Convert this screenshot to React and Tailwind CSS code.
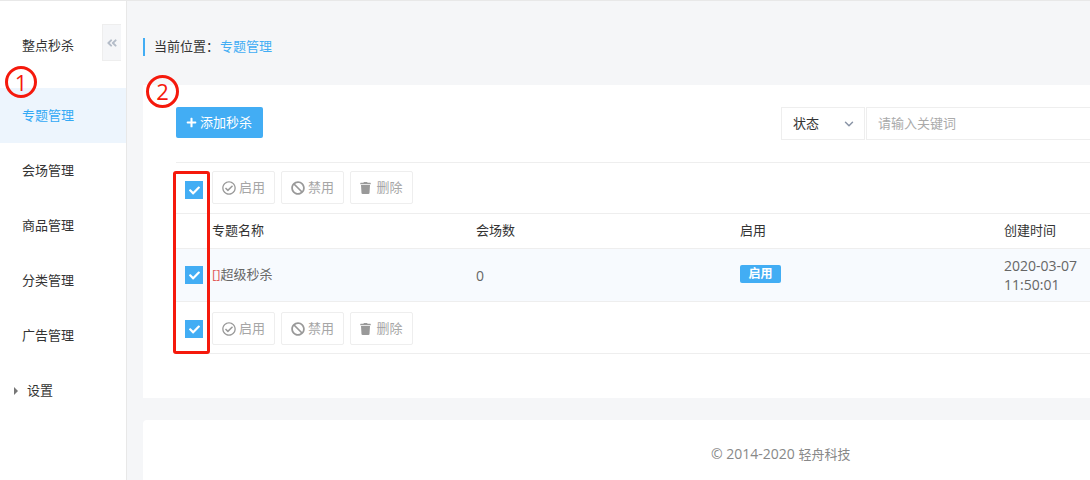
import { ChevronDown } from 'lucide-react'
import { FaPlus, FaCheck, FaRegCheckCircle, FaBan, FaTrash, FaAngleDoubleLeft } from 'react-icons/fa'

const font = { fontFamily: '"Open Sans", "Noto Sans CJK SC", sans-serif' }

const menuItems = ['专题管理', '会场管理', '商品管理', '分类管理', '广告管理']

const CheckBox = ({ className = '' }) => (
  <div className={`w-[18px] h-[18px] bg-[#42adf4] flex items-center justify-center shrink-0 ${className}`}>
    <FaCheck className="w-[11px] h-[11px] text-white" />
  </div>
)

const ActionBar = ({ className, boxClass }) => (
  <div className={`flex items-start pl-[9px] ${className}`}>
    <CheckBox className={boxClass} />
    <div className="flex gap-[6px] ml-[9px]">
      <button className="flex items-center justify-center gap-[3px] w-[63px] h-[33px] border border-[#eeeeee] rounded-[2px] text-[13px] text-[#a6a6a6]">
        <FaRegCheckCircle className="w-[14px] h-[14px] text-[#999999]" />
        启用
      </button>
      <button className="flex items-center justify-center gap-[3px] w-[63px] h-[33px] border border-[#eeeeee] rounded-[2px] text-[13px] text-[#a6a6a6]">
        <FaBan className="w-[14px] h-[14px] text-[#999999]" />
        禁用
      </button>
      <button className="flex items-center justify-center gap-[5px] w-[63px] h-[33px] border border-[#eeeeee] rounded-[2px] text-[13px] text-[#a6a6a6]">
        <FaTrash className="w-[11px] h-[12px] text-[#999999]" />
        删除
      </button>
    </div>
  </div>
)

const Sidebar = () => (
  <aside className="w-[127px] shrink-0 bg-white border-r border-[#e8e8e8] flex flex-col pt-[17px] text-[13px] text-[#333333]">
    <div className="h-[55px] flex items-center pl-[22px] mb-[15px]">整点秒杀</div>
    {menuItems.map((item, i) => (
      <div
        key={item}
        className={`h-[55px] flex items-center pl-[22px] pt-[1px] ${i === 0 ? 'bg-[#edf5fd] text-[#33a9f5]' : ''}`}
      >
        {item}
      </div>
    ))}
    <div className="h-[55px] flex items-center pl-[14px] pt-[1px] gap-[9px]">
      <span className="w-0 h-0 border-y-[4px] border-y-transparent border-l-[4px] border-l-[#777777]" />
      设置
    </div>
  </aside>
)

export default function App() {
  return (
    <div className="relative w-[1090px] h-[480px] overflow-hidden flex flex-col bg-[#f5f6f8]" style={font}>
      <div className="h-[1px] shrink-0 bg-[#e8e8e8]" />
      <div className="flex flex-1 min-h-0">
        <Sidebar />
        <main className="flex-1 min-w-0 pl-[16px] flex flex-col">
          <div className="h-[84px] shrink-0 pt-[37px]">
            <div className="h-[18px] border-l-2 border-[#42adf4] pl-[9px] flex items-center text-[13px] text-[#333333]">
              当前位置：<span className="text-[#42adf4] ml-[1px]">专题管理</span>
            </div>
          </div>
          <section className="h-[313px] shrink-0 bg-white pl-[33px] pt-[22px]">
            <div className="flex items-start justify-between">
              <button className="flex items-center gap-[3px] w-[87px] h-[31px] pl-[10px] bg-[#42adf4] rounded-[2px] text-white text-[13px]">
                <FaPlus className="w-[11px] h-[11px]" />
                添加秒杀
              </button>
              <div className="flex gap-[1px]">
                <div className="w-[84px] h-[33px] border border-[#eeeeee] flex items-center justify-between pl-[11px] pr-[8px] text-[13px] text-[#333333]">
                  状态
                  <ChevronDown className="w-[14px] h-[14px] text-[#8a94a6]" strokeWidth={2.5} />
                </div>
                <div className="w-[224px] h-[33px] border border-[#eeeeee] border-r-0 flex items-center pl-[11px] text-[13px] text-[#aaaaaa]">
                  请输入关键词
                </div>
              </div>
            </div>

            <div className="mt-[22px] border-t border-[#eeeeee]">
              <ActionBar className="h-[50px] pt-[8px]" boxClass="mt-[10px]" />
              <div className="border-t border-[#eeeeee] h-[35px] grid grid-cols-[36px_264px_264px_264px_1fr] items-center text-[13px] text-[#333333]">
                <span />
                <span>专题名称</span>
                <span>会场数</span>
                <span>启用</span>
                <span>创建时间</span>
              </div>
              <div className="border-t border-[#eeeeee] h-[53px] bg-[#f7fafe] grid grid-cols-[36px_264px_264px_264px_1fr] items-center text-[13px] text-[#666666]">
                <div className="pl-[9px]">
                  <CheckBox />
                </div>
                <span>
                  <span className="text-[#e25c5c]">[]</span>超级秒杀
                </span>
                <span className="text-[14px]">0</span>
                <span>
                  <span className="inline-flex items-center justify-center w-[41px] h-[18px] bg-[#42adf4] rounded-[2px] text-white text-[12px] font-bold -translate-y-[1px]">
                    启用
                  </span>
                </span>
                <span className="text-[14px] leading-[19px]">
                  2020-03-07
                  <br />
                  11:50:01
                </span>
              </div>
              <ActionBar className="h-[53px] pt-[10px] border-t border-b border-[#eeeeee]" boxClass="mt-[8px]" />
            </div>
          </section>
          <footer className="mt-[22px] flex-1 bg-white rounded-tl-[4px] pt-[23px] pl-[568px] text-[13px] text-[#888888]">
            <span className="text-[14px]">© 2014-2020 </span>轻舟科技
          </footer>
        </main>
      </div>

      {/* 收起侧栏 */}
      <div className="absolute left-[102px] top-[24px] w-[19px] h-[37px] bg-[#f5f6f8] border border-[#eeeeee] border-r-0 flex items-center justify-center">
        <FaAngleDoubleLeft className="w-[12px] h-[12px] text-[#b4bcc8]" />
      </div>

      {/* 标注 */}
      <div className="absolute left-[5px] top-[66px] w-[32px] h-[32px] rounded-full border-[3px] border-[#f5190c] flex items-center justify-center text-[#f5190c] text-[22px]">
        1
      </div>
      <div className="absolute left-[146px] top-[75px] w-[33px] h-[33px] rounded-full border-[3px] border-[#f5190c] flex items-center justify-center text-[#f5190c] text-[22px]">
        2
      </div>
      <div className="absolute left-[173px] top-[171px] w-[37px] h-[183px] border-[3px] border-[#f5190c] rounded-[3px]" />
    </div>
  )
}
